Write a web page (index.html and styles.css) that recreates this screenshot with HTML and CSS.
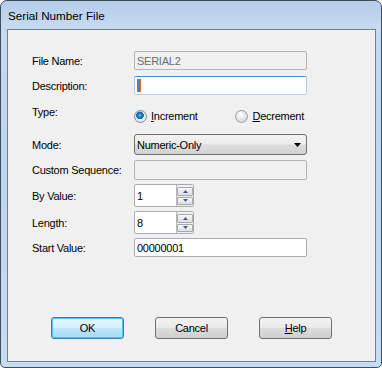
FILE: index.html
```html
<!DOCTYPE html>
<html lang="en">
<head>
  <meta charset="UTF-8">
  <title>Serial Number File</title>
  <link rel="stylesheet" href="styles.css">
</head>
<body>
  <div class="window">
    <div class="titlebar">
      <span class="title">Serial Number File</span>
    </div>
    <div class="client">
      <div class="form">
        <div class="row row-name">
          <label>File Name:</label>
          <div class="field disabled">SERIAL2</div>
        </div>
        <div class="row row-desc">
          <label>Description:</label>
          <div class="field focused"><span class="caret"></span></div>
        </div>
        <div class="row row-type">
          <label>Type:</label>
          <div class="radios">
            <span class="radio-item"><span class="radio checked"></span><span><u>I</u>ncrement</span></span>
            <span class="radio-item right"><span class="radio"></span><span><u>D</u>ecrement</span></span>
          </div>
        </div>
        <div class="row row-mode">
          <label>Mode:</label>
          <div class="combo">
            <span>Numeric-Only</span>
            <svg class="arrow" width="7" height="4" viewBox="0 0 7 4"><path d="M0 0h7L3.5 4z" fill="#000"/></svg>
          </div>
        </div>
        <div class="row row-custom">
          <label>Custom Sequence:</label>
          <div class="field disabled tall"></div>
        </div>
        <div class="row row-by">
          <label>By Value:</label>
          <div class="spin">
            <span>1</span>
            <div class="spin-btns">
              <span class="spin-btn"><svg width="5" height="3" viewBox="0 0 5 3"><path d="M0 3L2.5 0L5 3z" fill="#3c5a9a"/></svg></span>
              <span class="spin-btn"><svg width="5" height="3" viewBox="0 0 5 3"><path d="M0 0h5L2.5 3z" fill="#3c5a9a"/></svg></span>
            </div>
          </div>
        </div>
        <div class="row row-len">
          <label>Length:</label>
          <div class="spin">
            <span>8</span>
            <div class="spin-btns">
              <span class="spin-btn"><svg width="5" height="3" viewBox="0 0 5 3"><path d="M0 3L2.5 0L5 3z" fill="#3c5a9a"/></svg></span>
              <span class="spin-btn"><svg width="5" height="3" viewBox="0 0 5 3"><path d="M0 0h5L2.5 3z" fill="#3c5a9a"/></svg></span>
            </div>
          </div>
        </div>
        <div class="row row-start">
          <label>Start Value:</label>
          <div class="field">00000001</div>
        </div>
      </div>
      <div class="buttons">
        <button class="btn default">OK</button>
        <button class="btn">Cancel</button>
        <button class="btn"><u>H</u>elp</button>
      </div>
    </div>
  </div>
</body>
</html>
```
FILE: styles.css
```css
* {
  margin: 0;
  padding: 0;
  box-sizing: border-box;
}

body {
  width: 382px;
  height: 368px;
  background: #ffffff;
  font-family: 'Liberation Sans', Arial, sans-serif;
  font-size: 11px;
  letter-spacing: -0.25px;
  color: #000;
}

.window {
  width: 382px;
  height: 368px;
  border: 1px solid #3e4d5e;
  border-radius: 7px 7px 5px 5px;
  background: linear-gradient(180deg, #b4cde8 0px, #c6daf0 26px, #bdd5ee 160px, #c7dbf1 100%);
  padding: 0 5px 5px 6px;
  display: flex;
  flex-direction: column;
}

.titlebar {
  height: 28px;
  display: flex;
  align-items: center;
  padding-left: 1px;
}

.title {
  font-size: 11.7px;
  letter-spacing: 0;
  color: #000;
}

.client {
  flex: 1;
  border: 1px solid #6f8196;
  background: #f0f0f0;
  padding: 21px 0 0 24px;
}

.row {
  display: flex;
  align-items: center;
}

.row label {
  width: 102px;
}

.row-name { height: 19px; }
.row-desc { height: 19px; margin-top: 6px; }
.row-type { height: 20px; margin-top: 9px; align-items: flex-start; }
.row-mode { height: 21px; margin-top: 10px; }
.row-custom { height: 20px; margin-top: 5px; }
.row-by { height: 23px; margin-top: 4px; }
.row-len { height: 23px; margin-top: 4px; }
.row-start { height: 19px; margin-top: 4px; }

.row-type label {
  margin-top: 2px;
  line-height: 13px;
}

.field {
  width: 173px;
  height: 19px;
  border: 1px solid #abadb3;
  border-radius: 2px;
  background: #fff;
  padding-left: 2px;
  display: flex;
  align-items: center;
}

.field.tall {
  height: 20px;
}

.field.disabled {
  background: #f0f0f0;
  border-color: #b4b4b4;
  color: #6d6d6d;
}

.field.focused {
  border-color: #4f8ec6 #a9cbe6 #b8d4ec #a9cbe6;
}

.caret {
  width: 4px;
  height: 13px;
  background: #3d86d6;
  border-right: 1px solid #d8701e;
}

.radios {
  width: 173px;
  display: flex;
  padding-top: 6px;
  padding-right: 3px;
}

.radio-item {
  display: flex;
  align-items: center;
  gap: 4px;
  line-height: 13px;
}

.radio-item.right {
  margin-left: auto;
}

.radio {
  width: 13px;
  height: 13px;
  border-radius: 50%;
  border: 1px solid #9c9c9c;
  background: radial-gradient(circle at 40% 35%, #ffffff 0%, #e8e8e8 45%, #c9c9c9 100%);
}

.radio.checked {
  border-color: #6f8fae;
  background: radial-gradient(circle at 45% 40%, #6cc4f2 0%, #2a86d4 18%, #1b62a8 36%, #2d5f92 40%, #eeeeee 46%, #d4d4d4 100%);
}

.combo {
  width: 173px;
  height: 21px;
  border: 1px solid #707070;
  border-radius: 3px;
  background: linear-gradient(180deg, #f3f3f3 0%, #ebebeb 48%, #dddddd 52%, #d2d2d2 100%);
  display: flex;
  align-items: center;
  padding: 0 5px 0 2px;
}

.combo .arrow {
  margin-left: auto;
  margin-top: 1px;
}

.spin {
  width: 60px;
  height: 23px;
  border: 1px solid #abadb3;
  border-radius: 2px;
  background: #fff;
  display: flex;
  align-items: center;
  padding-left: 2px;
}

.spin-btns {
  margin-left: auto;
  width: 17px;
  height: 21px;
  display: flex;
  flex-direction: column;
  gap: 1px;
  padding: 2px 0 1px;
  background: #f0f0f0;
  border-left: 1px solid #b8b8b8;
}

.spin-btn {
  flex: 1;
  border: 1px solid #a9a9a9;
  border-radius: 1px;
  background: linear-gradient(180deg, #f7f7f7, #dedede);
  display: flex;
  align-items: center;
  justify-content: center;
}

.buttons {
  display: flex;
  gap: 31px;
  margin-top: 60px;
  margin-left: 19px;
}

.btn {
  width: 73px;
  height: 22px;
  border: 1px solid #707070;
  border-radius: 3px;
  background: linear-gradient(180deg, #f2f2f2 0%, #ebebeb 48%, #dddddd 52%, #cfcfcf 100%);
  font-family: 'Liberation Sans', Arial, sans-serif;
  font-size: 11px;
  letter-spacing: -0.25px;
  color: #000;
}

.btn.default {
  border-color: #3c7fb1;
  box-shadow: inset 0 0 0 1px #48c5f3;
  background: linear-gradient(180deg, #eaf6fd 0%, #d9f0fc 48%, #bee6fd 52%, #a7d9f5 100%);
}
```
